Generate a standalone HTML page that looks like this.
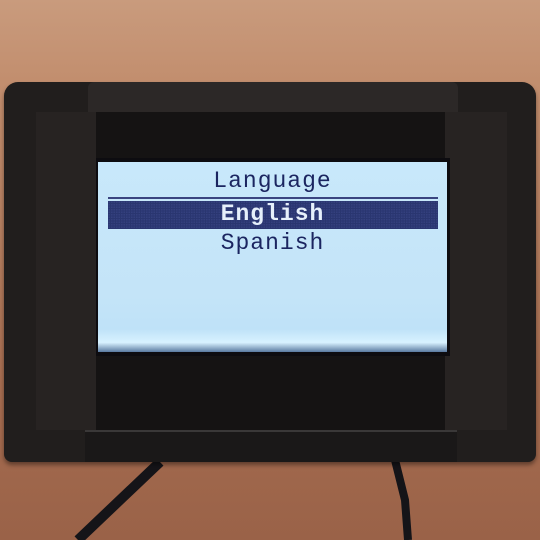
<!DOCTYPE html>
<html><head><meta charset="utf-8"><style>
html,body{margin:0;padding:0}
body{width:540px;height:540px;position:relative;overflow:hidden;
background:linear-gradient(180deg,#c99b7d 0%,#c28e6e 15%,#a66d50 70%,#9a6248 100%);}
.abs{position:absolute}
.dev{left:4px;top:82px;width:532px;height:380px;background:#211e1d;border-radius:14px 14px 8px 8px;
box-shadow:0 3px 4px rgba(0,0,0,.4)}
.top{left:88px;top:82px;width:370px;height:30px;background:#2c2827;border-radius:6px 6px 0 0}
.side{top:112px;height:318px;background:#272322}
.inner{left:96px;top:112px;width:349px;height:318px;background:#151313}
.screenframe{left:96px;top:158px;width:354px;height:198px;background:#0d0c10}
.scr{left:98px;top:162px;width:349px;height:190px;background:linear-gradient(180deg,#c8e8fb 0%,#c4e4f8 70%,#bfe2f8 88%,#d8f2ff 95%,#5a7aa0 100%);}
.t{font-family:"Liberation Mono",monospace;color:#1b2560;font-size:23px;text-align:center;width:349px;left:98px;letter-spacing:1px}
.bar{left:108px;top:201px;width:330px;height:28px;background:#2a3670;
background-image:radial-gradient(#34407e 40%,transparent 50%);background-size:2.5px 2.5px}
.line{left:108px;top:197px;width:330px;height:2px;background:#3a4580}
.bot{left:85px;top:430px;width:372px;height:30px;background:#1a1818;border-top:2px solid #3a3838}
</style></head><body>
<svg class="abs" style="left:0;top:0" width="540" height="540">
<path d="M160 462 L120 500 L78 540" stroke="#151418" stroke-width="10" fill="none"/>
<path d="M395 460 L405 500 L408 540" stroke="#151418" stroke-width="8" fill="none"/>
</svg>
<div class="abs dev"></div>
<div class="abs top"></div>
<div class="abs side" style="left:36px;width:60px"></div>
<div class="abs side" style="left:445px;width:62px"></div>
<div class="abs inner"></div>
<div class="abs screenframe"></div>
<div class="abs scr"></div>
<div class="abs t" style="top:168px">Language</div>
<div class="abs line"></div>
<div class="abs bar"></div>
<div class="abs t" style="top:201px;color:#e6f0fb;font-weight:bold">English</div>
<div class="abs t" style="top:230px">Spanish</div>
<div class="abs bot"></div>
</body></html>
